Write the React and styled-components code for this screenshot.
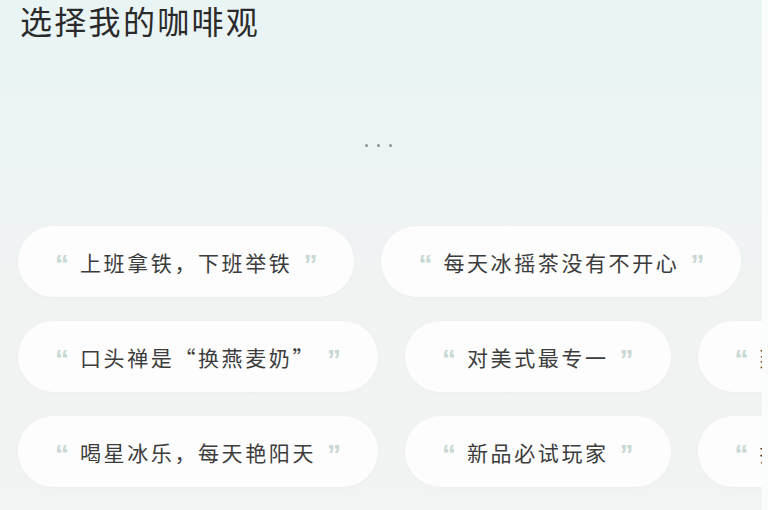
import React from "react";
import styled, { createGlobalStyle } from "styled-components";

const GlobalStyle = createGlobalStyle`
  html, body {
    margin: 0;
    padding: 0;
    background: #fbfcfc;
  }
  body {
    font-family: "Noto Sans CJK SC", "Noto Sans", sans-serif;
  }
`;

const rows = [
  ["上班拿铁，下班举铁", "每天冰摇茶没有不开心"],
  ["口头禅是“换燕麦奶”", "对美式最专一", "燕麦拿铁续命"],
  ["喝星冰乐，每天艳阳天", "新品必试玩家", "抹茶星冰乐"],
];

const App = () => {
  return (
    <>
      <GlobalStyle />
      <Screen>
        <Title>选择我的咖啡观</Title>
        <Dots>
          <span />
          <span />
          <span />
        </Dots>
        <Choices>
          {rows.map((row, i) => (
            <Row key={i}>
              {row.map((text) => (
                <Pill key={text}>
                  <Quote>“</Quote>
                  <Label>{text}</Label>
                  <Quote>”</Quote>
                </Pill>
              ))}
            </Row>
          ))}
        </Choices>
      </Screen>
    </>
  );
};

export default App;

const Screen = styled.div`
  width: 762px;
  height: 510px;
  overflow: hidden;
  background: linear-gradient(
    180deg,
    #e9f4f4 0%,
    #edf4f4 30%,
    #f1f3f3 55%,
    #f2f3f3 100%
  );
`;

const Title = styled.h1`
  margin: 0;
  padding: 0 0 0 20px;
  font-size: 32px;
  line-height: 40px;
  font-weight: 400;
  letter-spacing: 2.3px;
  color: #2a2a2a;
`;

const Dots = styled.div`
  display: flex;
  justify-content: center;
  gap: 9px;
  margin-top: 104px;
  padding-right: 6px;

  span {
    width: 3px;
    height: 3px;
    border-radius: 50%;
    background: #8e9191;
  }
`;

const Choices = styled.div`
  display: flex;
  flex-direction: column;
  gap: 24px;
  margin-top: 79px;
`;

const Row = styled.div`
  display: flex;
  gap: 27px;
  padding-left: 18px;
  white-space: nowrap;
`;

const Pill = styled.div`
  flex: none;
  display: flex;
  align-items: center;
  gap: 10px;
  height: 71px;
  padding: 0 36px;
  border-radius: 36px;
  background: #fdfdfd;
  box-shadow: 0 1px 4px rgba(0, 0, 0, 0.025);
`;

const Quote = styled.span`
  font-family: "Liberation Sans", sans-serif;
  font-weight: 700;
  font-size: 28px;
  line-height: 1;
  color: #c8d8d3;
  transform: translateY(3px);
  width: 16px;
  text-align: center;
`;

const Label = styled.span`
  font-size: 21px;
  letter-spacing: 2.6px;
  color: #3c3c3c;
`;
